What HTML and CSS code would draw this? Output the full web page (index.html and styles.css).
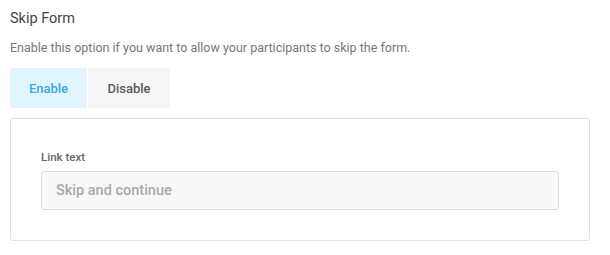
FILE: index.html
```html
<!DOCTYPE html>
<html>
<head>
<meta charset="utf-8">
<link rel="stylesheet" href="styles.css">
</head>
<body>
<div class="setting">
  <h3 class="title">Skip Form</h3>
  <p class="desc">Enable this option if you want to allow your participants to skip the form.</p>
  <div class="toggle">
    <button class="opt active">Enable</button>
    <button class="opt">Disable</button>
  </div>
  <div class="card">
    <label class="label">Link text</label>
    <input class="input" type="text" placeholder="Skip and continue">
  </div>
</div>
</body>
</html>
```
FILE: styles.css
```css
* { box-sizing: border-box; }
body {
  margin: 0;
  background: #fff;
  font-family: Roboto, "Liberation Sans", sans-serif;
}
.setting {
  padding: 10px 20px 0 10px;
  display: flex;
  flex-direction: column;
}
.title {
  margin: 0;
  font-size: 14.5px;
  font-weight: 400;
  color: #444;
  line-height: 18px;
}
.desc {
  margin: 12px 0 0;
  font-size: 12.5px;
  color: #777;
  line-height: 16px;
}
.toggle {
  display: flex;
  margin-top: 12px;
  align-self: flex-start;
  border-radius: 3px;
  overflow: hidden;
}
.opt {
  border: 0;
  height: 40px;
  font-family: inherit;
  font-size: 13px;
  font-weight: 500;
  color: #5a5a5a;
  background: #f6f6f6;
  padding: 0;
}
.opt.active {
  width: 78px;
  background: #e1f5fe;
  color: #3aa5e0;
  border-right: 1px solid #fff;
}
.opt:not(.active) { width: 82px; }
.card {
  margin-top: 10px;
  border: 1px solid #e2e2e2;
  border-radius: 3px;
  padding: 31px 30px 30px 30px;
  display: flex;
  flex-direction: column;
}
.label {
  font-size: 11.5px;
  font-weight: 500;
  color: #666;
  line-height: 14px;
}
.input {
  margin-top: 7px;
  height: 39px;
  border: 1px solid #dcdcdc;
  border-radius: 3px;
  background: #f8f8f8;
  padding: 0 14px;
  font-family: inherit;
  font-size: 14.5px;
  font-weight: 500;
  color: #555;
}
.input::placeholder { color: #aaa; }
```
